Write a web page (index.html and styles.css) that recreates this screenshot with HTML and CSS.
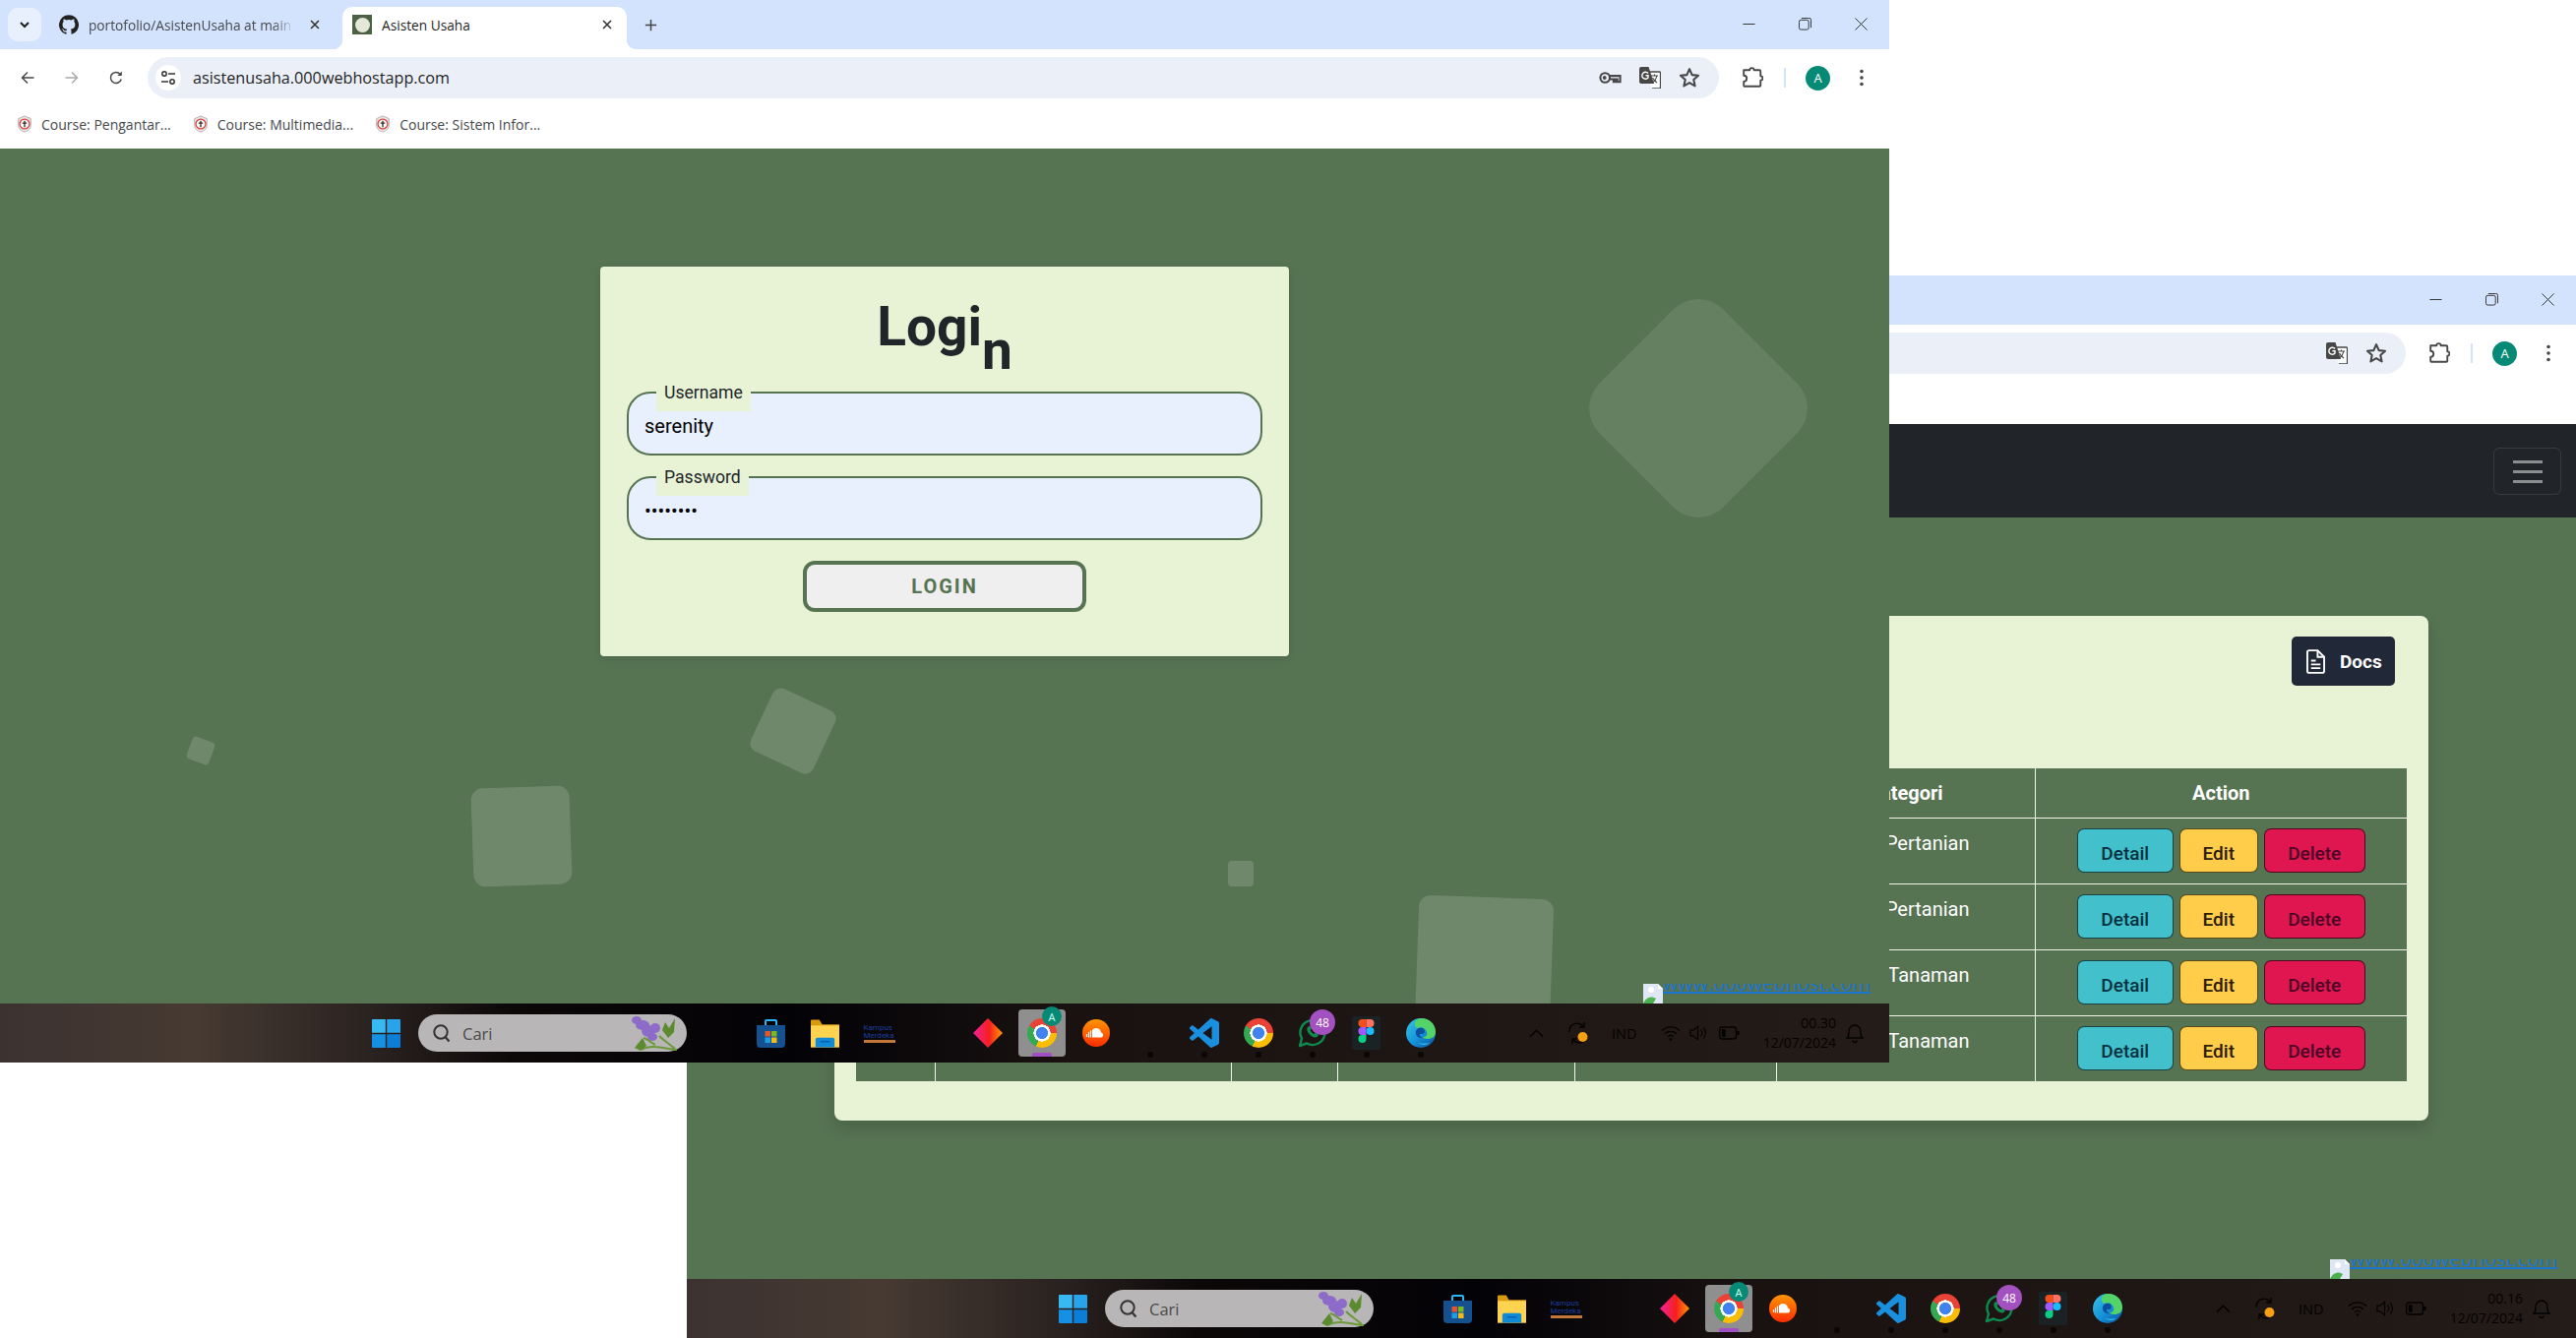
FILE: index.html
```html
<!DOCTYPE html>
<html lang="en">
<head>
  <meta charset="UTF-8" />
  <title>Asisten Usaha</title>
  <link rel="stylesheet" href="styles.css">
</head>
<body>
  <svg class="sprite" width="0" height="0">
    <symbol id="i-github" viewBox="0 0 24 24"><path d="M12 .3a12 12 0 0 0-3.8 23.4c.6.1.8-.3.8-.6v-2c-3.3.7-4-1.6-4-1.6-.6-1.4-1.4-1.8-1.4-1.8-1-.7.1-.7.1-.7 1.2 0 1.9 1.2 1.9 1.2 1 1.8 2.8 1.3 3.5 1 0-.8.4-1.3.7-1.6-2.7-.3-5.5-1.3-5.5-6 0-1.2.5-2.3 1.3-3.1-.2-.4-.6-1.6 0-3.2 0 0 1-.3 3.4 1.2a11.5 11.5 0 0 1 6 0c2.3-1.5 3.3-1.2 3.3-1.2.6 1.6.2 2.8 0 3.2.9.8 1.3 1.9 1.3 3.2 0 4.6-2.8 5.6-5.5 5.9.5.4.9 1 .9 2.2v3.3c0 .3.1.7.8.6A12 12 0 0 0 12 .3"/></symbol>
    <symbol id="i-down" viewBox="0 0 16 16"><path d="M4 6l4 4 4-4" fill="none" stroke="currentColor" stroke-width="2"/></symbol>
    <symbol id="i-x" viewBox="0 0 16 16"><path d="M3.5 3.5l9 9M12.5 3.5l-9 9" fill="none" stroke="currentColor" stroke-width="1.8"/></symbol>
    <symbol id="i-plus" viewBox="0 0 16 16"><path d="M8 2v12M2 8h12" fill="none" stroke="currentColor" stroke-width="1.6"/></symbol>
    <symbol id="i-back" viewBox="0 0 16 16"><path d="M14.5 8H2.5M8 2.5L2.5 8 8 13.5" fill="none" stroke="currentColor" stroke-width="1.5"/></symbol>
    <symbol id="i-forward" viewBox="0 0 16 16"><path d="M1.5 8h12M8 2.5L13.5 8 8 13.5" fill="none" stroke="currentColor" stroke-width="1.5"/></symbol>
    <symbol id="i-reload" viewBox="0 0 16 16"><path d="M13.2 9.5A5.5 5.5 0 1 1 12 4.2" fill="none" stroke="currentColor" stroke-width="1.5"/><path d="M13.8 1.5V6H9.300z" fill="currentColor"/></symbol>
    <symbol id="i-tune" viewBox="0 0 16 16"><g fill="none" stroke="currentColor" stroke-width="1.5"><circle cx="4" cy="4" r="2.2"/><path d="M8 4h7M1 12h7"/><circle cx="12" cy="12" r="2.2"/></g></symbol>
    <symbol id="i-key" viewBox="0 0 24 14"><g fill="none" stroke="currentColor" stroke-width="2.2"><circle cx="6.5" cy="7" r="5"/><path d="M11.5 5h11v6.5h-3V8.500h-2v3h-2v-3h-4"/></g><circle cx="6" cy="7" r="2" fill="currentColor"/></symbol>
    <symbol id="i-translate" viewBox="0 0 22 22"><path d="M1 1h9l2 4h9v16H12l-1-5H1z" fill="#fff"/><path d="M2 0h7.5L15 17H2a2 2 0 0 1-2-2V2a2 2 0 0 1 2-2z" fill="currentColor"/><path d="M11 5h9.5a1 1 0 0 1 1 1v15a1 1 0 0 1-1 1H13" fill="none" stroke="currentColor" stroke-width="1.3"/><path d="M12 9h7M15.500 7.500V9M18 9c-.6 3-2.5 5.500-4.500 7M13.500 11c1 2 2.500 3.500 4.500 5" fill="none" stroke="currentColor" stroke-width="1.2"/><path d="M9 6.500A3.500 3.500 0 1 0 9 11V8.800H6.500" fill="none" stroke="#fff" stroke-width="1.4"/></symbol>
    <symbol id="i-star" viewBox="0 0 20 20"><path d="M10 2l2.400 5.400 5.800.6-4.300 3.900 1.200 5.700-5.100-2.900-5.100 2.900 1.200-5.700L1.800 8l5.800-.6z" fill="none" stroke="currentColor" stroke-width="1.9" stroke-linejoin="round"/></symbol>
    <symbol id="i-puzzle" viewBox="0 0 20 20"><path d="M2 3h5.500a2 2 0 0 1 4 0h5a1 1 0 0 1 1 1v4.500a2 2 0 0 1 0 4V17a1 1 0 0 1-1 1H3a1 1 0 0 1-1-1v-3.500a2.500 2.500 0 0 0 0-5.500z" fill="none" stroke="currentColor" stroke-width="1.7" stroke-linejoin="round"/></symbol>
    <symbol id="i-more" viewBox="0 0 6 20"><circle cx="3" cy="3.5" r="1.8"/><circle cx="3" cy="10" r="1.8"/><circle cx="3" cy="16.5" r="1.8"/></symbol>
    <symbol id="i-min" viewBox="0 0 14 14"><path d="M.5 7h13" stroke="currentColor" fill="none"/></symbol>
    <symbol id="i-restore" viewBox="0 0 14 14"><rect x=".5" y="2.5" width="10.5" height="10.5" rx="2" fill="none" stroke="currentColor"/><path d="M3 .5h8.500a2 2 0 0 1 2 2V11" fill="none" stroke="currentColor"/></symbol>
    <symbol id="i-close" viewBox="0 0 14 14"><path d="M.5.5l13 13M13.500.5l-13 13" stroke="currentColor" fill="none"/></symbol>
    <symbol id="i-crest" viewBox="0 0 20 20"><path d="M10 1l7 3v8c0 3-3 6-7 7-4-1-7-4-7-7V4z" fill="#e8e4e4" stroke="#b5a9a9"/><circle cx="10" cy="10" r="5.5" fill="#fff" stroke="#d9403a" stroke-width="1.4"/><path d="M10 6.500v7M7.500 9h5" stroke="#3a2a2a" stroke-width="1.5"/></symbol>
    <symbol id="i-win" viewBox="0 0 29 29"><path d="M0 1a1 1 0 0 1 1-1h12.800v13.800H0z" fill="#38b9f2"/><path d="M15.200 0H28a1 1 0 0 1 1 1v12.800H15.200z" fill="#28a4ea"/><path d="M0 15.200h13.800V29H1a1 1 0 0 1-1-1z" fill="#1590e2"/><path d="M15.200 15.200H29V28a1 1 0 0 1-1 1H15.200z" fill="#0b7ed8"/></symbol>
    <symbol id="i-search" viewBox="0 0 20 20"><circle cx="9" cy="9" r="6.7" fill="none" stroke="currentColor" stroke-width="2"/><path d="M13.500 14l4 4.500" stroke="currentColor" stroke-width="2.2"/></symbol>
    <symbol id="i-plant" viewBox="0 0 50 38"><g fill="#8c6cc8"><ellipse cx="7" cy="6" rx="5" ry="4"/><ellipse cx="13" cy="11" rx="7" ry="5"/><ellipse cx="19" cy="17" rx="7" ry="6"/><ellipse cx="26" cy="14" rx="5" ry="5"/><ellipse cx="23" cy="23" rx="5" ry="4"/></g><path d="M12 36c10-6 24-1 36 0M30 22c4 4 10 8 16 13M26 31c-4-2-8-6-12-7" fill="none" stroke="#6c9a3a" stroke-width="2"/><g fill="#5c8a2e"><path d="M36 8l4 6 6-10-1 14-6 6-6-8z"/><path d="M5 34l8-10 4 8-6 5z"/></g></symbol>
    <symbol id="i-store" viewBox="0 0 29 29"><path d="M9 6V2a1 1 0 0 1 1-1h9a1 1 0 0 1 1 1v4" fill="none" stroke="#29b6f6" stroke-width="2"/><path d="M0 6h29v19a4 4 0 0 1-4 4H4a4 4 0 0 1-4-4z" fill="#15508f"/><rect x="8.5" y="12" width="5.5" height="5.5" fill="#e8542a"/><rect x="15" y="12" width="5.5" height="5.5" fill="#7cb824"/><rect x="8.5" y="18.5" width="5.5" height="5.5" fill="#1e9ce8"/><rect x="15" y="18.5" width="5.5" height="5.5" fill="#f8ba14"/></symbol>
    <symbol id="i-folder" viewBox="0 0 30 29"><path d="M0 1a1 1 0 0 1 1-1h8l3 5h18v24H0z" fill="#d89a10"/><path d="M0 6h30v23H0z" fill="#fdd34f"/><path d="M5 29v-8a2 2 0 0 1 2-2h16a2 2 0 0 1 2 2v8z" fill="#0f8ad8"/><path d="M10 23h10" stroke="#0a5ea8" stroke-width="1.5"/></symbol>
    <symbol id="i-diamond" viewBox="0 0 30 30"><defs><linearGradient id="g-dia" x1="0" x2="1" y1="0" y2="0"><stop offset="0" stop-color="#f0209c"/><stop offset=".55" stop-color="#f7201c"/><stop offset="1" stop-color="#ff9a00"/></linearGradient></defs><path d="M15 0l15 15-15 15L0 15z" fill="url(#g-dia)"/></symbol>
    <symbol id="i-soundcloud" viewBox="0 0 28 28"><defs><linearGradient id="g-sc" x1="0" x2="0" y1="0" y2="1"><stop offset="0" stop-color="#ff9500"/><stop offset="1" stop-color="#ff2d00"/></linearGradient></defs><circle cx="14" cy="14" r="14" fill="url(#g-sc)"/><path d="M10 18.500V11a5 5 0 0 1 9 2.500 2.600 2.600 0 0 1 .5 5z" fill="#fff"/><path d="M4.500 18v-3M6.500 18.500V13M8.500 18.500v-7" stroke="#fff" stroke-width="1.2"/></symbol>
    <symbol id="i-vscode" viewBox="0 0 24 24"><path d="M23.15 2.587L18.21.21a1.494 1.494 0 0 0-1.705.29l-9.46 8.63-4.12-3.128a.999.999 0 0 0-1.276.057L.327 7.261A1 1 0 0 0 .326 8.74L3.899 12 .326 15.26a1 1 0 0 0 .001 1.479L1.65 17.94a.999.999 0 0 0 1.276.057l4.12-3.128 9.46 8.63a1.492 1.492 0 0 0 1.704.29l4.942-2.377A1.5 1.5 0 0 0 24 20.06V3.939a1.5 1.5 0 0 0-.85-1.352zm-5.146 14.861L10.826 12l7.178-5.448v10.896z" fill="#1a8fdd"/></symbol>
    <symbol id="i-whatsapp" viewBox="0 0 30 30"><path d="M2 28l2-7.500a12.500 12.500 0 1 1 5 5z" fill="none" stroke="#0f8a4f" stroke-width="2.4" stroke-linejoin="round"/><path d="M10.500 8.500c-2 1.500-1.500 5 1.500 8s6 3.800 8 2c1-1 .8-2 .5-2.300l-2.600-1.400-1.300 1.300c-1.500-.4-3.500-2.400-4-4l1.200-1.300-1.300-2.600c-.5-.4-1.300-.4-2 .3z" fill="#0f8a4f"/></symbol>
    <symbol id="i-figma" viewBox="0 0 29 34"><rect width="29" height="34" rx="2" fill="#1a2224"/><path d="M14.500 3h-4a4 4 0 0 0 0 8h4z" fill="#f24e1e"/><path d="M14.500 3h4a4 4 0 0 1 0 8h-4z" fill="#ff7262"/><path d="M14.500 11h-4a4 4 0 0 0 0 8h4z" fill="#a259ff"/><circle cx="18.500" cy="15" r="4" fill="#1abcfe"/><path d="M10.500 19h4v4a4 4 0 1 1-4-4z" fill="#0acf83"/></symbol>
    <symbol id="i-edge" viewBox="0 0 30 30"><defs><linearGradient id="g-edge" x1="0" x2="1" y1="0" y2="1"><stop offset="0" stop-color="#38c8e8"/><stop offset=".55" stop-color="#1490d8"/><stop offset="1" stop-color="#0c4f9c"/></linearGradient></defs><circle cx="15" cy="15" r="15" fill="url(#g-edge)"/><path d="M15 0c9 0 15 6 15 14 0 5-4 7-8 7-3 0-5-1-5-2 3 0 5-2 4-5-1-4-6-6-10-4C6 6 10 0 15 0z" fill="#54d468"/><path d="M18 20c-5 1-9-2-8-7 1-3 4-4 7-3 3 2 2 5 0 6-2 0-3-1-3 1 0 2 2 3 4 3z" fill="#0c4f9c"/><path d="M24 25c-4 3-9 2-12 0 3 1 8 1 12 0z" fill="#38c8e8"/></symbol>
    <symbol id="i-caret" viewBox="0 0 16 10"><path d="M1 9l7-7 7 7" fill="none" stroke="currentColor" stroke-width="1.5"/></symbol>
    <symbol id="i-sync" viewBox="0 0 22 24"><path d="M2 11a8 8 0 0 1 14-6M20 13a8 8 0 0 1-14 6" fill="none" stroke="currentColor" stroke-width="1.4"/><path d="M17 1v5h-5M5 23v-5h5" fill="none" stroke="currentColor" stroke-width="1.4"/><circle cx="15.5" cy="16" r="5" fill="#f7a012"/></symbol>
    <symbol id="i-wifi" viewBox="0 0 20 16"><path d="M1 5.500a13 13 0 0 1 18 0M4 8.700a9 9 0 0 1 12 0M7 11.700a4.500 4.500 0 0 1 6 0" fill="none" stroke="currentColor" stroke-width="1.4"/><circle cx="10" cy="14.5" r="1.3" fill="currentColor"/></symbol>
    <symbol id="i-speaker" viewBox="0 0 20 18"><path d="M1 6h3l5-4v14l-5-4H1z" fill="none" stroke="currentColor" stroke-width="1.3"/><path d="M12 5.500a5 5 0 0 1 0 7M15 3a9 9 0 0 1 0 12" fill="none" stroke="currentColor" stroke-width="1.3"/></symbol>
    <symbol id="i-battery" viewBox="0 0 22 14"><rect x=".7" y=".7" width="17.6" height="12.6" rx="2.5" fill="none" stroke="currentColor" stroke-width="1.4"/><rect x="3" y="3" width="4" height="8" fill="currentColor"/><rect x="19" y="5" width="2.5" height="4" fill="currentColor"/></symbol>
    <symbol id="i-bell" viewBox="0 0 18 20"><path d="M1 15c2-2 2-3 2-7a6 6 0 0 1 12 0c0 4 0 5 2 7zM7 17.500a2 2 0 0 0 4 0" fill="none" stroke="currentColor" stroke-width="1.3"/></symbol>
    <symbol id="i-broken" viewBox="0 0 20 20"><path d="M0 0h15l5 5v15H0z" fill="#dfe7f5"/><path d="M15 0v5h5z" fill="#fff"/><path d="M0 20c3-7 9-8 13-5l-3 5z" fill="#4caf50"/><circle cx="8" cy="6" r="3" fill="#fff"/></symbol>
    <symbol id="i-doc" viewBox="0 0 20 26"><path d="M3 1h9l7 7v15a2 2 0 0 1-2 2H3a2 2 0 0 1-2-2V3a2 2 0 0 1 2-2z" fill="none" stroke="currentColor" stroke-width="2"/><path d="M12 1v7h7M5 12h5M5 16h10M5 20h10" fill="none" stroke="currentColor" stroke-width="2"/></symbol>
  </svg>

  <!-- window behind -->
  <div class="window window-back">
    <div class="tabstrip">
      <div class="window-controls">
        <svg class="ctl"><use href="#i-min"/></svg>
        <svg class="ctl"><use href="#i-restore"/></svg>
        <svg class="ctl"><use href="#i-close"/></svg>
      </div>
    </div>
    <div class="toolbar">
      <div class="omnibox">
        <div class="omni-end">
          <svg class="omni-icon"><use href="#i-translate"/></svg>
          <svg class="omni-icon"><use href="#i-star"/></svg>
        </div>
      </div>
      <svg class="puzzle"><use href="#i-puzzle"/></svg>
      <span class="divider"></span>
      <span class="avatar">A</span>
      <svg class="more"><use href="#i-more"/></svg>
    </div>
    <div class="bookmarks"></div>
    <div class="page page-back">
      <nav class="navbar">
        <div class="toggler"><span></span><span></span><span></span></div>
      </nav>
      <section class="list-card">
        <a class="btn-docs"><svg class="doc-icon"><use href="#i-doc"/></svg>Docs</a>
        <table class="data-table">
          <colgroup>
            <col class="c1"><col class="c2"><col class="c3"><col class="c4"><col class="c5"><col class="c6"><col class="c7">
          </colgroup>
          <thead>
            <tr><th></th><th></th><th></th><th></th><th></th><th>Kategori</th><th>Action</th></tr>
          </thead>
          <tbody>
            <tr>
              <td></td><td></td><td></td><td></td><td></td><td class="cat">Pertanian</td>
              <td><div class="actions"><a class="btn btn-detail">Detail</a><a class="btn btn-edit">Edit</a><a class="btn btn-delete">Delete</a></div></td>
            </tr>
            <tr>
              <td></td><td></td><td></td><td></td><td></td><td class="cat">Pertanian</td>
              <td><div class="actions"><a class="btn btn-detail">Detail</a><a class="btn btn-edit">Edit</a><a class="btn btn-delete">Delete</a></div></td>
            </tr>
            <tr>
              <td></td><td></td><td></td><td></td><td></td><td class="cat">Tanaman</td>
              <td><div class="actions"><a class="btn btn-detail">Detail</a><a class="btn btn-edit">Edit</a><a class="btn btn-delete">Delete</a></div></td>
            </tr>
            <tr>
              <td></td><td></td><td></td><td></td><td></td><td class="cat">Tanaman</td>
              <td><div class="actions"><a class="btn btn-detail">Detail</a><a class="btn btn-edit">Edit</a><a class="btn btn-delete">Delete</a></div></td>
            </tr>
          </tbody>
        </table>
      </section>
      <div class="host-link">
        <svg class="broken"><use href="#i-broken"/></svg>
        <span class="host-text"><a>www.000webhost.com</a></span>
      </div>
    </div>
    <div class="taskbar">
      <svg class="win"><use href="#i-win"/></svg>
      <div class="search">
        <svg class="search-icon"><use href="#i-search"/></svg>
        <span class="search-text">Cari</span>
        <svg class="plant"><use href="#i-plant"/></svg>
      </div>
      <div class="apps">
        <span class="app"><svg class="i29"><use href="#i-store"/></svg></span>
        <span class="app dot"><svg class="i29"><use href="#i-folder"/></svg></span>
        <span class="app"><span class="merdeka">Kampus<br>Merdeka</span></span>
        <span class="app"></span>
        <span class="app"><svg class="i30"><use href="#i-diamond"/></svg></span>
        <span class="app active"><span class="chrome"></span><span class="mini-avatar">A</span></span>
        <span class="app"><svg class="i28"><use href="#i-soundcloud"/></svg></span>
        <span class="app dot"></span>
        <span class="app dot"><svg class="i30"><use href="#i-vscode"/></svg></span>
        <span class="app dot"><span class="chrome"></span></span>
        <span class="app dot"><svg class="i30"><use href="#i-whatsapp"/></svg><span class="badge">48</span></span>
        <span class="app dot"><svg class="i-fig"><use href="#i-figma"/></svg></span>
        <span class="app dot"><svg class="i30"><use href="#i-edge"/></svg></span>
      </div>
      <div class="tray">
        <svg class="t-caret"><use href="#i-caret"/></svg>
        <svg class="t-sync"><use href="#i-sync"/></svg>
        <span class="t-lang">IND</span>
        <svg class="t-wifi"><use href="#i-wifi"/></svg>
        <svg class="t-speaker"><use href="#i-speaker"/></svg>
        <svg class="t-battery"><use href="#i-battery"/></svg>
        <span class="t-clock">00.16<br>12/07/2024</span>
        <svg class="t-bell"><use href="#i-bell"/></svg>
      </div>
    </div>
  </div>

  <!-- window in front -->
  <div class="window window-front">
    <div class="tabstrip">
      <span class="tab-menu"><svg class="i16"><use href="#i-down"/></svg></span>
      <div class="tab tab-off">
        <svg class="tab-gh"><use href="#i-github"/></svg>
        <span class="tab-title fade">portofolio/AsistenUsaha at main</span>
        <svg class="tab-x"><use href="#i-x"/></svg>
      </div>
      <div class="tab tab-on">
        <span class="site-icon"><i></i></span>
        <span class="tab-title">Asisten Usaha</span>
        <svg class="tab-x"><use href="#i-x"/></svg>
      </div>
      <svg class="new-tab"><use href="#i-plus"/></svg>
      <div class="window-controls">
        <svg class="ctl"><use href="#i-min"/></svg>
        <svg class="ctl"><use href="#i-restore"/></svg>
        <svg class="ctl"><use href="#i-close"/></svg>
      </div>
    </div>
    <div class="toolbar">
      <svg class="nav-icon"><use href="#i-back"/></svg>
      <svg class="nav-icon off"><use href="#i-forward"/></svg>
      <svg class="nav-icon"><use href="#i-reload"/></svg>
      <div class="omnibox">
        <span class="tune"><svg class="i16"><use href="#i-tune"/></svg></span>
        <span class="url">asistenusaha.000webhostapp.com</span>
        <div class="omni-end">
          <svg class="omni-key"><use href="#i-key"/></svg>
          <svg class="omni-icon"><use href="#i-translate"/></svg>
          <svg class="omni-icon"><use href="#i-star"/></svg>
        </div>
      </div>
      <svg class="puzzle"><use href="#i-puzzle"/></svg>
      <span class="divider"></span>
      <span class="avatar">A</span>
      <svg class="more"><use href="#i-more"/></svg>
    </div>
    <div class="bookmarks">
      <span class="mark"><svg class="crest"><use href="#i-crest"/></svg>Course: Pengantar...</span>
      <span class="mark"><svg class="crest"><use href="#i-crest"/></svg>Course: Multimedia...</span>
      <span class="mark"><svg class="crest"><use href="#i-crest"/></svg>Course: Sistem Infor...</span>
    </div>
    <div class="page page-front">
      <span class="shape s1"></span>
      <span class="shape s2"></span>
      <span class="shape s3"></span>
      <span class="shape s4"></span>
      <span class="shape s5"></span>
      <span class="shape s6"></span>
      <form class="login-card">
        <h1 class="login-title">Logi<span class="drop">n</span></h1>
        <div class="field">
          <label class="field-label" for="username">Username</label>
          <input class="field-input" id="username" type="text" value="serenity">
        </div>
        <div class="field">
          <label class="field-label" for="password">Password</label>
          <input class="field-input" id="password" type="password" value="serenity">
        </div>
        <button class="btn-login" type="button">LOGIN</button>
      </form>
      <div class="host-link">
        <svg class="broken"><use href="#i-broken"/></svg>
        <span class="host-text"><a>www.000webhost.com</a></span>
      </div>
    </div>
    <div class="taskbar">
      <svg class="win"><use href="#i-win"/></svg>
      <div class="search">
        <svg class="search-icon"><use href="#i-search"/></svg>
        <span class="search-text">Cari</span>
        <svg class="plant"><use href="#i-plant"/></svg>
      </div>
      <div class="apps">
        <span class="app"><svg class="i29"><use href="#i-store"/></svg></span>
        <span class="app dot"><svg class="i29"><use href="#i-folder"/></svg></span>
        <span class="app"><span class="merdeka">Kampus<br>Merdeka</span></span>
        <span class="app"></span>
        <span class="app"><svg class="i30"><use href="#i-diamond"/></svg></span>
        <span class="app active"><span class="chrome"></span><span class="mini-avatar">A</span></span>
        <span class="app"><svg class="i28"><use href="#i-soundcloud"/></svg></span>
        <span class="app dot"></span>
        <span class="app dot"><svg class="i30"><use href="#i-vscode"/></svg></span>
        <span class="app dot"><span class="chrome"></span></span>
        <span class="app dot"><svg class="i30"><use href="#i-whatsapp"/></svg><span class="badge">48</span></span>
        <span class="app dot"><svg class="i-fig"><use href="#i-figma"/></svg></span>
        <span class="app dot"><svg class="i30"><use href="#i-edge"/></svg></span>
      </div>
      <div class="tray">
        <svg class="t-caret"><use href="#i-caret"/></svg>
        <svg class="t-sync"><use href="#i-sync"/></svg>
        <span class="t-lang">IND</span>
        <svg class="t-wifi"><use href="#i-wifi"/></svg>
        <svg class="t-speaker"><use href="#i-speaker"/></svg>
        <svg class="t-battery"><use href="#i-battery"/></svg>
        <span class="t-clock">00.30<br>12/07/2024</span>
        <svg class="t-bell"><use href="#i-bell"/></svg>
      </div>
    </div>
  </div>
</body>
</html>
```

FILE: styles.css
```css
* {
  box-sizing: border-box;
}

html, body {
  height: 100%;
}

body {
  margin: 0;
  position: relative;
  overflow: hidden;
  background: #fff;
  font-family: "Open Sans", Arial, sans-serif;
}

.sprite {
  position: absolute;
}

svg {
  display: block;
  flex: none;
  fill: currentColor;
}

/* windows on the desktop */
.window {
  position: absolute;
  width: 1920px;
  height: 1080px;
  display: flex;
  flex-direction: column;
  overflow: hidden;
}

.window-front {
  left: 0;
  top: 0;
}

.window-back {
  left: 698px;
  top: 280px;
}

/* tabs */
.tabstrip {
  height: 50px;
  flex: none;
  display: flex;
  align-items: center;
  padding-left: 8px;
  background: #d3e3fd;
  color: #1f1f1f;
}

.tab-menu {
  width: 34px;
  height: 34px;
  border-radius: 10px;
  background: #e8f0fe;
  display: flex;
  align-items: center;
  justify-content: center;
}

.i16 {
  width: 16px;
  height: 16px;
}

.tab {
  height: 43px;
  margin-top: 7px;
  display: flex;
  align-items: center;
  font-size: 13.7px;
  border-radius: 10px 10px 0 0;
  position: relative;
}

.tab-off {
  width: 306px;
  padding: 0 0 7px 18px;
  color: #45484c;
}

.tab-gh {
  width: 20px;
  height: 20px;
  color: #222;
}

.tab-title {
  margin-left: 10px;
  white-space: nowrap;
  overflow: hidden;
}

.fade {
  width: 209px;
  -webkit-mask-image: linear-gradient(to right, #000 90%, transparent);
  mask-image: linear-gradient(to right, #000 90%, transparent);
}

.tab-x {
  width: 14px;
  height: 14px;
  margin-left: 14px;
  color: #333;
}

.tab-on {
  width: 289px;
  padding: 0 0 7px 10px;
  background: #fff;
  color: #1f1f1f;
}

.tab-on::before,
.tab-on::after {
  content: "";
  position: absolute;
  bottom: 0;
  width: 10px;
  height: 10px;
}

.tab-on::before {
  left: -10px;
  background: radial-gradient(circle at 0 0, transparent 10px, #fff 10.5px);
}

.tab-on::after {
  right: -10px;
  background: radial-gradient(circle at 100% 0, transparent 10px, #fff 10.5px);
}

.tab-on .tab-title {
  width: 222px;
}

.tab-on .tab-x {
  margin-left: 0;
}

.site-icon {
  width: 20px;
  height: 20px;
  background: #4a6145;
  display: flex;
  align-items: center;
  justify-content: center;
}

.site-icon i {
  width: 15px;
  height: 15px;
  border-radius: 50%;
  background: #e4e8d8;
}

.new-tab {
  width: 15px;
  height: 15px;
  margin-left: 17px;
  color: #444;
}

.window-controls {
  margin-left: auto;
  display: flex;
  gap: 44px;
  padding-right: 22px;
  color: #2a2a2a;
  margin-top: -2px;
}

.ctl {
  width: 13px;
  height: 13px;
}

/* toolbar */
.toolbar {
  height: 59px;
  flex: none;
  display: flex;
  align-items: center;
  padding: 8px 0 9px 20px;
  background: #fff;
  border-radius: 10px 10px 0 0;
  color: #474747;
}

.nav-icon {
  width: 16px;
  height: 16px;
  margin-right: 29px;
}

.nav-icon.off {
  color: #a9a9a9;
}

.nav-icon:nth-child(3) {
  margin-right: 24px;
}

.omnibox {
  width: 1597px;
  height: 42px;
  border-radius: 21px;
  background: #ebeff8;
  display: flex;
  align-items: center;
  padding-left: 8px;
}

.window-back .toolbar {
  padding-left: 150px;
}

.tune {
  width: 26px;
  height: 26px;
  border-radius: 50%;
  background: #fff;
  display: flex;
  align-items: center;
  justify-content: center;
  color: #333;
}

.url {
  margin-left: 12px;
  font-size: 16.2px;
  color: #1f1f1f;
}

.omni-end {
  margin-left: auto;
  display: flex;
  align-items: center;
  gap: 18px;
  padding-right: 19px;
}

.omni-key {
  width: 23px;
  height: 14px;
}

.omni-icon {
  width: 22px;
  height: 22px;
}

.puzzle {
  width: 22px;
  height: 22px;
  margin-left: 23px;
}

.divider {
  width: 2px;
  height: 20px;
  margin-left: 21px;
  background: #d3e3fd;
}

.avatar {
  width: 25px;
  height: 25px;
  margin-left: 20px;
  border-radius: 50%;
  background: #078a75;
  color: #fff;
  font-size: 13px;
  display: flex;
  align-items: center;
  justify-content: center;
}

.more {
  width: 6px;
  height: 20px;
  margin-left: 29px;
}

/* bookmarks */
.bookmarks {
  height: 42px;
  flex: none;
  display: flex;
  align-items: center;
  gap: 21px;
  padding: 0 0 8px 16px;
  background: #fff;
  color: #45484c;
  font-size: 14px;
}

.mark {
  display: flex;
  align-items: center;
  gap: 8px;
  white-space: nowrap;
}

.crest {
  width: 18px;
  height: 20px;
}

/* pages */
.page {
  flex: 1;
  position: relative;
  overflow: hidden;
  background: #567352;
  font-family: Roboto, Arial, sans-serif;
}

.shape {
  position: absolute;
  background: rgba(255, 255, 255, 0.15);
}

.s1 {
  left: 1637px;
  top: 175px;
  width: 178px;
  height: 178px;
  border-radius: 36px;
  transform: rotate(45deg);
  background: rgba(255, 255, 255, 0.09);
}

.s2 {
  left: 192px;
  top: 600px;
  width: 24px;
  height: 24px;
  border-radius: 4px;
  transform: rotate(20deg);
}

.s3 {
  left: 771px;
  top: 557px;
  width: 70px;
  height: 70px;
  border-radius: 9px;
  transform: rotate(25deg);
}

.s4 {
  left: 480px;
  top: 649px;
  width: 100px;
  height: 100px;
  border-radius: 12px;
  transform: rotate(-2deg);
}

.s5 {
  left: 1248px;
  top: 724px;
  width: 26px;
  height: 26px;
  border-radius: 4px;
}

.s6 {
  left: 1440px;
  top: 761px;
  width: 137px;
  height: 137px;
  border-radius: 12px;
  transform: rotate(2deg);
}

/* login */
.login-card {
  position: relative;
  width: 700px;
  height: 396px;
  margin: 120px auto 0;
  padding: 0 27px;
  border-radius: 4px;
  background: #e8f3d6;
  box-shadow: 0 2px 8px rgba(0, 0, 0, 0.1);
}

.login-title {
  height: 127px;
  margin: 0;
  padding-top: 27px;
  text-align: center;
  font-size: 55px;
  line-height: 68px;
  font-weight: 700;
  color: #212529;
}

.drop {
  vertical-align: -24px;
  line-height: 0;
}

.field {
  position: relative;
  margin-bottom: 21px;
}

.field-label {
  position: absolute;
  left: 30px;
  top: -7px;
  height: 27px;
  padding: 0 8px;
  background: #e8f3d6;
  color: #212529;
  font-size: 17.6px;
  line-height: 17px;
}

.field-input {
  display: block;
  width: 100%;
  height: 65px;
  padding: 4px 16px 0;
  border: 2px solid #567352;
  border-radius: 24px;
  background: #e8f0fe;
  color: #000;
  font-family: inherit;
  font-size: 20px;
}

.btn-login {
  display: block;
  width: 288px;
  height: 52px;
  margin: 21px auto 0;
  border: 4px solid #567352;
  border-radius: 12px;
  background: #efefef;
  color: #567352;
  font-family: inherit;
  font-size: 20px;
  font-weight: 700;
  letter-spacing: 2px;
}

/* navbar + table in the window behind */
.navbar {
  height: 95px;
  display: flex;
  align-items: center;
  justify-content: flex-end;
  padding-right: 15px;
  background: #212529;
}

.toggler {
  width: 69px;
  height: 48px;
  margin-top: 1px;
  border: 1px solid rgba(255, 255, 255, 0.1);
  border-radius: 6px;
  display: flex;
  flex-direction: column;
  align-items: center;
  justify-content: center;
  gap: 7px;
}

.toggler span {
  width: 30px;
  height: 3px;
  background: #8c8e90;
}

.list-card {
  width: 1620px;
  height: 513px;
  margin: 100px 0 0 150px;
  padding: 21px 22px 0;
  border-radius: 8px;
  background: #e8f3d6;
  box-shadow: 0 8px 16px rgba(0, 0, 0, 0.14);
}

.btn-docs {
  width: 105px;
  height: 50px;
  margin: 0 12px 0 auto;
  padding-left: 15px;
  display: flex;
  align-items: center;
  gap: 15px;
  border-radius: 5px;
  background: #212838;
  color: #fff;
  font-size: 19px;
  font-weight: 700;
}

.doc-icon {
  width: 19px;
  height: 25px;
}

.data-table {
  width: 1576px;
  margin-top: 84px;
  table-layout: fixed;
  border-collapse: collapse;
  background: #567352;
  color: #fff;
}

.c1 { width: 80px; }
.c2 { width: 301px; }
.c3 { width: 108px; }
.c4 { width: 241px; }
.c5 { width: 205px; }
.c6 { width: 263px; }
.c7 { width: 378px; }

.data-table th,
.data-table td {
  padding: 0;
  border-left: 1px solid #f2f6ea;
  border-top: 1px solid #f2f6ea;
}

.data-table th:first-child,
.data-table td:first-child {
  border-left: 0;
}

.data-table thead th {
  height: 50px;
  border-top: 0;
  font-size: 20px;
  font-weight: 700;
}

.data-table td {
  height: 67px;
  font-size: 20px;
}

.data-table td.cat {
  vertical-align: top;
  padding: 13px 66px 0 0;
  text-align: right;
}

.actions {
  display: flex;
  justify-content: center;
  gap: 6px;
}

.btn {
  height: 45px;
  padding-top: 5px;
  border: 1px solid rgba(0, 0, 0, 0.65);
  border-radius: 7px;
  display: flex;
  align-items: center;
  justify-content: center;
  font-size: 19px;
  font-weight: 500;
}

.btn-detail {
  width: 98px;
  background: #42c1cc;
  color: #03303f;
}

.btn-edit {
  width: 80px;
  background: #ffcd4a;
  color: #2b1a05;
}

.btn-delete {
  width: 103px;
  background: #e01650;
  color: #4a0425;
}

/* the host banner with its missing image */
.host-link {
  position: absolute;
  right: 19px;
  bottom: 0;
  height: 20px;
  display: flex;
  align-items: flex-start;
}

.broken {
  width: 20px;
  height: 20px;
}

.host-text {
  height: 10px;
  overflow: hidden;
  display: flex;
  align-items: flex-end;
  font-family: "Open Sans", Arial, sans-serif;
  font-size: 20px;
  line-height: 1;
  color: #1a74d2;
  text-decoration: underline;
}

/* taskbar */
.taskbar {
  height: 60px;
  flex: none;
  display: flex;
  align-items: center;
  padding-left: 378px;
  background: linear-gradient(to right, #3c3230 0, #463a32 200px, #2a2220 380px, #0c0808 520px, #030206 800px, #0e0a0c 950px, #1a1210 1080px, #241c19 1920px);
}

.win {
  width: 29px;
  height: 29px;
}

.search {
  width: 273px;
  height: 38px;
  margin-left: 18px;
  padding: 0 8px 0 14px;
  border-radius: 19px;
  background: #b8b6b6;
  display: flex;
  align-items: center;
  color: #333;
}

.search-icon {
  width: 20px;
  height: 20px;
}

.search-text {
  margin-left: 11px;
  font-size: 16.5px;
  color: #4a4a4a;
}

.plant {
  width: 50px;
  height: 38px;
  margin-left: auto;
}

.apps {
  display: flex;
  margin-left: 58px;
}

.app {
  position: relative;
  width: 55px;
  height: 60px;
  display: flex;
  align-items: center;
  justify-content: center;
}

.dot::after {
  content: "";
  position: absolute;
  left: 24.5px;
  top: 49px;
  width: 6px;
  height: 6px;
  border-radius: 50%;
  background: #0a0706;
}

.i28 {
  width: 28px;
  height: 28px;
}

.i29 {
  width: 29px;
  height: 29px;
}

.i30 {
  width: 30px;
  height: 30px;
}

.i-fig {
  width: 29px;
  height: 34px;
}

.merdeka {
  width: 32px;
  font-family: Roboto, Arial, sans-serif;
  font-size: 8px;
  line-height: 8px;
  color: #1a3d9a;
  border-bottom: 3px solid #c4773a;
  white-space: nowrap;
}

.active::before {
  content: "";
  position: absolute;
  left: 3.5px;
  top: 6px;
  width: 48px;
  height: 48px;
  border-radius: 4px;
  background: #8f8f8f;
}

.active::after {
  content: "";
  position: absolute;
  left: 17.5px;
  top: 50px;
  width: 20px;
  height: 4px;
  border-radius: 2px 2px 0 0;
  background: #a34fc4;
}

.chrome {
  position: relative;
  width: 30px;
  height: 30px;
  border-radius: 50%;
  background:
    radial-gradient(circle, #3f82f0 0 28%, #fff 29% 40%, transparent 41%),
    conic-gradient(#ea4335 0 90deg, #fbbc04 90deg 205deg, #34a853 205deg 300deg, #ea4335 300deg);
}

.mini-avatar {
  position: absolute;
  left: 28px;
  top: 3px;
  width: 20px;
  height: 20px;
  border-radius: 50%;
  background: #078a75;
  color: #cfe;
  font-size: 11px;
  display: flex;
  align-items: center;
  justify-content: center;
}

.badge {
  position: absolute;
  left: 25px;
  top: 6px;
  width: 26px;
  height: 26px;
  border-radius: 50%;
  background: #a350c0;
  color: #fff;
  font-size: 12px;
  display: flex;
  align-items: center;
  justify-content: center;
}

.tray {
  display: flex;
  align-items: center;
  height: 60px;
  color: #030202;
  margin-left: 83px;
}

.t-caret {
  width: 15px;
  height: 10px;
}

.t-sync {
  width: 22px;
  height: 24px;
  margin-left: 24px;
}

.t-lang {
  margin-left: 23px;
  width: 26px;
  font-size: 14.5px;
  white-space: nowrap;
}

.t-wifi {
  width: 20px;
  height: 16px;
  margin-left: 24px;
}

.t-speaker {
  width: 19px;
  height: 18px;
  margin-left: 9px;
}

.t-battery {
  width: 21px;
  height: 14px;
  margin-left: 11px;
}

.t-clock {
  width: 90px;
  margin-left: 8px;
  text-align: right;
  font-size: 14px;
  line-height: 20px;
}

.t-bell {
  width: 18px;
  height: 20px;
  margin-left: 10px;
}
```
